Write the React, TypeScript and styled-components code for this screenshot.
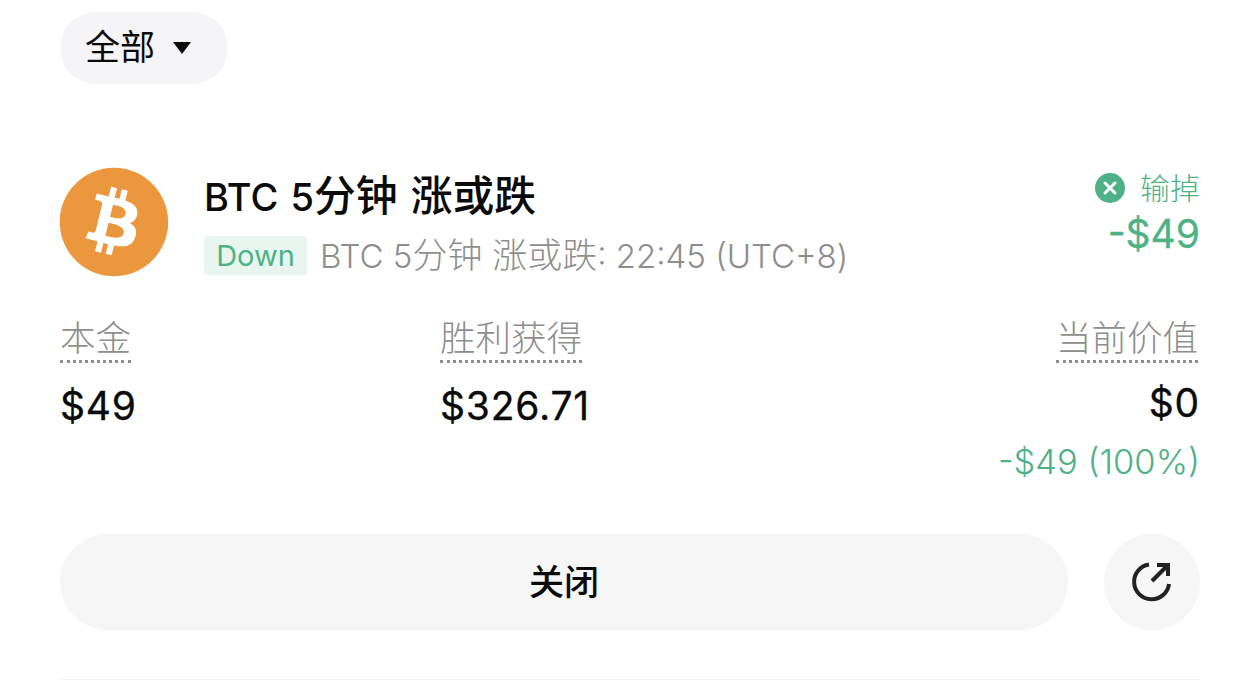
import React from 'react';
import styled, {createGlobalStyle} from 'styled-components';
import {FaBitcoin} from 'react-icons/fa';

const GREEN = '#4fb286';
const GREY = '#8e8e8e';
const FONT = 'Inter, "Noto Sans CJK SC", sans-serif';

const GlobalStyle = createGlobalStyle`
    html, body {
        margin: 0;
        background: #fff;
        overflow: hidden;
    }
    body {
        font-family: ${FONT};
        color: #0b0b0b;
    }
`;

const Page = styled.div`
    width: 1260px;
    height: 689px;
    box-sizing: border-box;
    padding: 12px 60px 0;
    display: flex;
    flex-direction: column;
    overflow: hidden;
`;

const FilterPill = styled.div`
    align-self: flex-start;
    width: 168px;
    height: 72px;
    box-sizing: border-box;
    padding-left: 25px;
    border-radius: 36px;
    background: #f5f5f7;
    display: flex;
    align-items: center;
    gap: 18px;
    font-size: 35px;
`;

const PillLabel = styled.span`
    line-height: 71px;
    height: 72px;
`;

const Cjk = styled.span<{$scale: number}>`
    font-size: ${({$scale}) => $scale}em;
`;

const Header = styled.div`
    margin-top: 84px;
    height: 108px;
    display: flex;
`;

const CoinIcon = styled.div`
    width: 108px;
    height: 108px;
    flex: none;
    border-radius: 50%;
    background: #fff;
    svg {
        display: block;
        margin: -2px;
        color: #ea973d;
    }
`;

const HeaderText = styled.div`
    flex: 1;
    margin-left: 36px;
    display: flex;
    flex-direction: column;
`;

const Title = styled.div`
    font-size: 38px;
    font-weight: 500;
    line-height: 56px;
    word-spacing: 2px;
`;

const SubRow = styled.div`
    margin-top: 11px;
    display: flex;
    align-items: center;
    gap: 13px;
    font-size: 33px;
    font-weight: 300;
    color: ${GREY};
    line-height: 38px;
`;

const OutcomeTag = styled.span`
    width: 103px;
    height: 39px;
    border-radius: 4px;
    background: #e9f6f0;
    color: ${GREEN};
    font-size: 29px;
    font-weight: 400;
    display: flex;
    align-items: center;
    justify-content: center;
`;

const Result = styled.div`
    display: flex;
    flex-direction: column;
    align-items: flex-end;
    color: ${GREEN};
`;

const ResultStatus = styled.div`
    display: flex;
    align-items: center;
    gap: 15px;
    font-size: 30px;
    font-weight: 300;
    line-height: 40px;
`;

const ResultAmount = styled.div`
    font-size: 39px;
    line-height: 52px;
    font-weight: 400;
    -webkit-text-stroke: 0.3px ${GREEN};
`;

const Stats = styled.div`
    margin-top: 41px;
    display: grid;
    grid-template-columns: 380px 1fr auto;
`;

const Stat = styled.div<{$right?: boolean}>`
    display: flex;
    flex-direction: column;
    align-items: ${({$right}) => ($right ? 'flex-end' : 'flex-start')};
`;

const StatLabel = styled.span<{$inset?: boolean}>`
    font-size: 35.5px;
    font-weight: 300;
    line-height: 43px;
    color: ${GREY};
    border-bottom: 3px dotted ${GREY};
    margin-right: ${({$inset}) => ($inset ? '2px' : '0')};
`;

const StatValue = styled.div<{$raised?: boolean}>`
    margin-top: ${({$raised}) => ($raised ? '14px' : '17px')};
    font-size: 39px;
    line-height: 52px;
    font-weight: 400;
    letter-spacing: 0.8px;
    -webkit-text-stroke: 0.3px #0b0b0b;
`;

const StatChange = styled.div`
    margin-top: 9px;
    font-size: 34.5px;
    font-weight: 300;
    line-height: 48px;
    color: ${GREEN};
`;

const Actions = styled.div`
    margin-top: 48px;
    display: flex;
    gap: 36px;
`;

const CloseButton = styled.div`
    flex: 1;
    height: 96px;
    border-radius: 48px;
    background: #f6f6f6;
    display: flex;
    align-items: center;
    justify-content: center;
    font-size: 35px;
    font-weight: 500;
    line-height: 92px;
`;

const ShareButton = styled.div`
    width: 96px;
    height: 96px;
    border-radius: 50%;
    background: #f6f6f6;
    display: flex;
    align-items: center;
    justify-content: center;
`;

const Divider = styled.div`
    margin-top: 49px;
    height: 1px;
    background: #f4f4f4;
`;

export default function App() {
    return (
        <Page>
            <GlobalStyle />
            <FilterPill>
                <PillLabel>全部</PillLabel>
                <svg width="18" height="12" viewBox="0 0 18 12">
                    <path d="M0 0H18L9 12Z" fill="#0b0b0b" />
                </svg>
            </FilterPill>
            <Header>
                <CoinIcon>
                    <FaBitcoin size={112} />
                </CoinIcon>
                <HeaderText>
                    <Title>
                        BTC 5<Cjk $scale={1.1}>分钟 涨或跌</Cjk>
                    </Title>
                    <SubRow>
                        <OutcomeTag>Down</OutcomeTag>
                        <span>
                            BTC 5<Cjk $scale={1.06}>分钟 涨或跌</Cjk>: 22:45 (UTC+8)
                        </span>
                    </SubRow>
                </HeaderText>
                <Result>
                    <ResultStatus>
                        <svg width="30" height="30" viewBox="0 0 30 30">
                            <circle cx="15" cy="15" r="15" fill={GREEN} />
                            <path d="M10 10L20 20M20 10L10 20" stroke="#fff" strokeWidth="3" strokeLinecap="round" />
                        </svg>
                        输掉
                    </ResultStatus>
                    <ResultAmount>-$49</ResultAmount>
                </Result>
            </Header>
            <Stats>
                <Stat>
                    <StatLabel>本金</StatLabel>
                    <StatValue>$49</StatValue>
                </Stat>
                <Stat>
                    <StatLabel>胜利获得</StatLabel>
                    <StatValue>$326.71</StatValue>
                </Stat>
                <Stat $right>
                    <StatLabel $inset>当前价值</StatLabel>
                    <StatValue $raised>$0</StatValue>
                    <StatChange>-$49 (100%)</StatChange>
                </Stat>
            </Stats>
            <Actions>
                <CloseButton>关闭</CloseButton>
                <ShareButton>
                    <svg width="44" height="44" viewBox="0 0 44 44" fill="none" stroke="#222" strokeWidth="4">
                        <path d="M19 4.5A17.5 17.5 0 1 0 39 24" />
                        <path d="M22 21L37 6" />
                        <path d="M27 5H38V16" />
                    </svg>
                </ShareButton>
            </Actions>
            <Divider />
        </Page>
    );
}
